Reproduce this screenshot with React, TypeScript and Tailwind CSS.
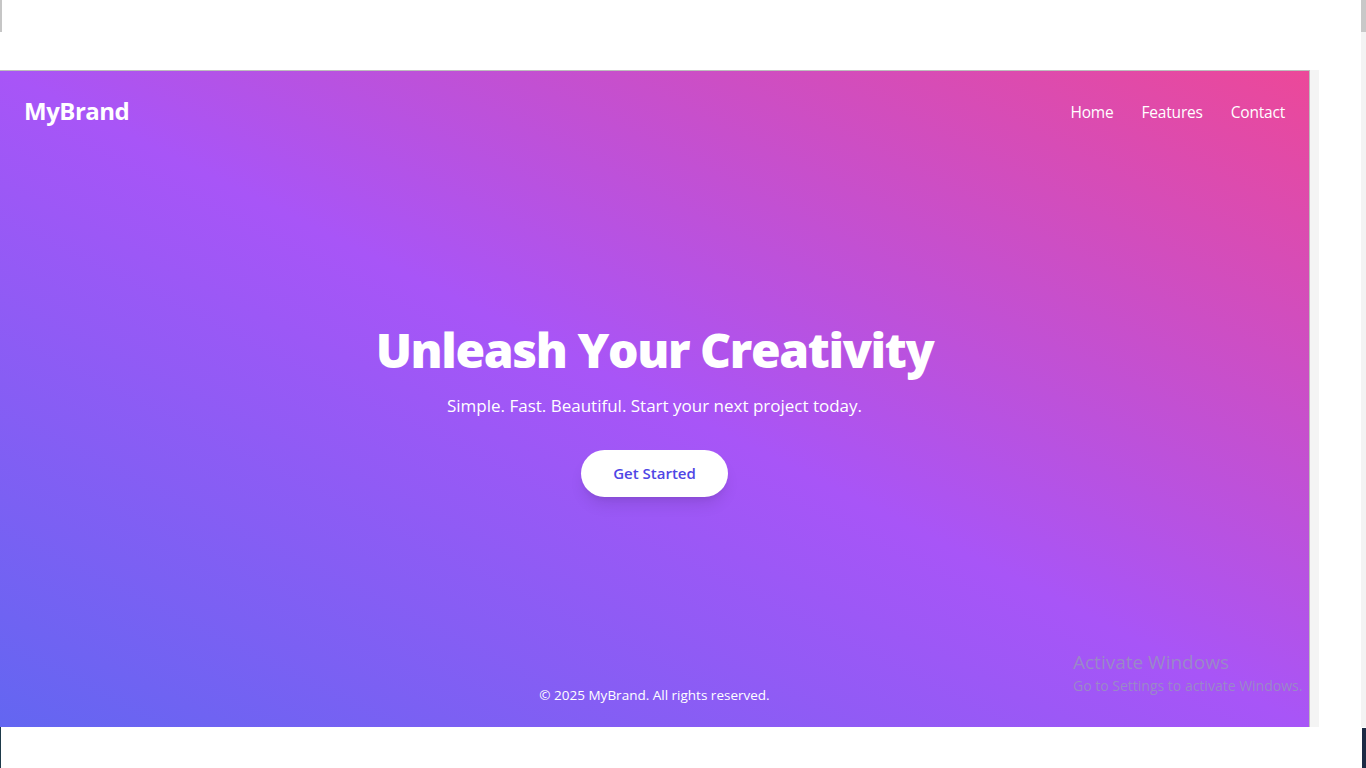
import React from "react";

export default function App() {
  const font = { fontFamily: '"Open Sans", "Noto Sans", sans-serif' };
  return (
    <div className="relative w-[1366px] h-[768px] bg-white overflow-hidden" style={font}>
      {/* left top gray sliver */}
      <div className="absolute left-0 top-0 w-[2px] h-[32px] bg-[#c6c6c6]" />
      {/* right scrollbar */}
      <div className="absolute right-0 top-0 w-[5px] h-[727px] bg-[#f3f3f3]">
        <div className="w-full h-[32px] bg-[#c8c8c8]" />
      </div>
      <div className="absolute right-0 top-[728px] w-[4px] h-[40px] bg-[#1c2a44]" />
      <div className="absolute left-0 top-[727px] w-[1px] h-[41px] bg-[#1e3a4a]" />

      <div className="pt-[70px] flex">
        <div className="relative w-[1310px] h-[657px] flex flex-col bg-[linear-gradient(to_top_right,#6366f1,#a855f7,#ec4899)] border-t border-r border-[#bdbdbd] text-white">
          <header className="flex items-center justify-between px-6 pt-[24px] pb-6">
            <div className="text-2xl font-bold leading-8 tracking-[-0.5px]">MyBrand</div>
            <nav className="flex gap-[28px] text-[15.5px] leading-6 pt-[2px] tracking-[-0.2px]">
              <a>Home</a>
              <a>Features</a>
              <a>Contact</a>
            </nav>
          </header>
          <main className="flex-1 flex flex-col items-center justify-center pb-[14px]">
            <h1 className="text-5xl leading-[48px] font-extrabold tracking-[-1.4px] mb-[18px]">Unleash Your Creativity</h1>
            <p className="text-[17px] leading-7 mb-[30px]">Simple. Fast. Beautiful. Start your next project today.</p>
            <button className="bg-white text-[#4f46e5] font-semibold rounded-full w-[147px] h-[47px] shadow-lg text-[15px]">
              Get Started
            </button>
          </main>
          <footer className="text-center text-[13.5px] leading-5 pb-[22px]">© 2025 MyBrand. All rights reserved.</footer>

          {/* windows watermark */}
          <div className="absolute left-[1073px] top-[580px] text-[#9a88c8] leading-tight whitespace-nowrap">
            <div className="text-[19px]">Activate Windows</div>
            <div className="text-[14px] mt-[2px]">Go to Settings to activate Windows.</div>
          </div>
        </div>
        <div className="w-[9px] h-[657px] bg-[#f4f4f4] self-start" />
      </div>
    </div>
  );
}
